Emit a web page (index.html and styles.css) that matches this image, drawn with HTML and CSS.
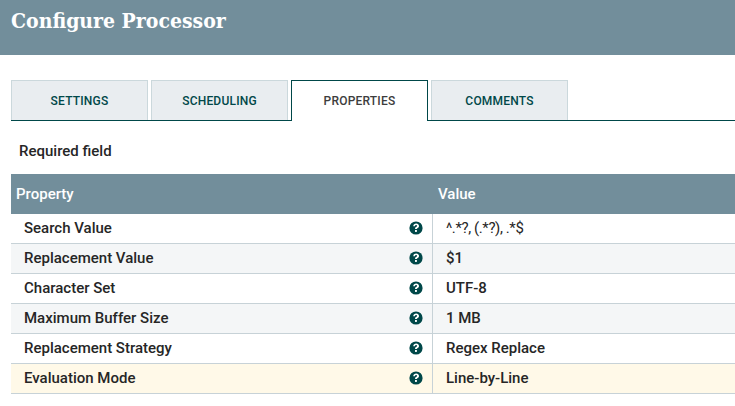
FILE: index.html
```html
<!DOCTYPE html>
<html lang="en">
<head>
<meta charset="utf-8">
<title>Configure Processor</title>
<link rel="stylesheet" href="styles.css">
</head>
<body>
<svg class="defs" width="0" height="0" aria-hidden="true"><defs>
<symbol id="help" viewBox="0 0 14 14">
<circle cx="7" cy="7" r="6.6" fill="#004849"/>
<path d="M4.2 5.2C4.4 3.5 5.6 2.6 7.2 2.6c1.6 0 2.8 1 2.8 2.3 0 1.1-.6 1.6-1.3 2-.6.4-.8.6-.8 1.2H6c0-1.2.4-1.8 1.1-2.2.6-.4 1-.6 1-1 0-.5-.4-.8-1-.8-.7 0-1.1.4-1.2 1.1z" fill="#fff"/>
<rect x="6" y="9" width="1.9" height="1.9" fill="#fff"/>
</symbol>
</defs></svg>
<header class="banner"><h1 class="title">Configure Processor</h1></header>
<nav class="tabs">
<div class="tab">SETTINGS</div>
<div class="tab">SCHEDULING</div>
<div class="tab active">PROPERTIES</div>
<div class="tab">COMMENTS</div>
</nav>
<p class="required">Required field</p>
<section class="grid">
<div class="row head"><div class="name">Property</div><div class="value">Value</div></div>
<div class="row"><div class="name"><span>Search Value</span><svg class="help"><use href="#help"/></svg></div><div class="value pattern">^.*?, (.*?), .*$</div></div>
<div class="row alt"><div class="name"><span>Replacement Value</span><svg class="help"><use href="#help"/></svg></div><div class="value">$1</div></div>
<div class="row"><div class="name"><span>Character Set</span><svg class="help"><use href="#help"/></svg></div><div class="value">UTF-8</div></div>
<div class="row alt"><div class="name"><span>Maximum Buffer Size</span><svg class="help"><use href="#help"/></svg></div><div class="value">1 MB</div></div>
<div class="row"><div class="name"><span>Replacement Strategy</span><svg class="help"><use href="#help"/></svg></div><div class="value">Regex Replace</div></div>
<div class="row selected"><div class="name"><span>Evaluation Mode</span><svg class="help"><use href="#help"/></svg></div><div class="value">Line-by-Line</div></div>
</section>
</body>
</html>
```

FILE: styles.css
```css
* { box-sizing: border-box; }
html, body { margin: 0; padding: 0; }
body {
  width: 735px;
  height: 406px;
  overflow: hidden;
  background: #fff;
  font-family: Roboto, "Liberation Sans", sans-serif;
  color: #262626;
}
.defs { position: absolute; }
.banner {
  height: 55px;
  background: #728e9b;
  padding: 7px 0 0 11px;
}
.title {
  margin: 0;
  font-family: "DejaVu Serif Condensed", "DejaVu Serif", serif;
  font-stretch: condensed;
  font-size: 21px;
  line-height: 27px;
  font-weight: 700;
  color: #fff;
}
.tabs {
  display: flex;
  gap: 3px;
  margin: 25px 0 0 11px;
  height: 41px;
  border-bottom: 1px solid #004849;
}
.tab {
  width: 137px;
  height: 40px;
  background: #e9edf0;
  border: 1px solid #cbd8dc;
  border-bottom: 0;
  display: flex;
  align-items: center;
  justify-content: center;
  font-size: 12px;
  font-weight: 500;
  letter-spacing: 0.2px;
  color: #004849;
}
.tab.active {
  height: 41px;
  background: #fff;
  border-color: #004849;
  color: #3d3d3d;
}
.required {
  margin: 0;
  padding: 22px 0 0 19px;
  height: 53px;
  font-size: 15px;
  line-height: 17px;
  font-weight: 500;
}
.grid { margin-left: 11px; }
.row {
  display: grid;
  grid-template-columns: 421px 1fr;
  height: 30px;
  border-bottom: 1px solid #c7d2d7;
  font-size: 15px;
  font-weight: 500;
  align-items: stretch;
}
.row.alt { background: #f4f6f7; }
.row.selected { background: #fff9e8; }
.row.head {
  height: 40px;
  background: #728e9b;
  border-bottom: 0;
  color: #fff;
}
.name {
  display: flex;
  align-items: center;
  justify-content: space-between;
  padding: 0 9px 2px 13px;
}
.value {
  display: flex;
  align-items: center;
  padding: 0 0 2px 13px;
  border-left: 1px solid #c7d2d7;
}
.pattern {
  font-weight: 400;
  letter-spacing: -0.4px;
}
.head .name { padding: 0 0 0 5px; }
.head .value { padding: 0 0 0 6px; border-left: 0; }
.help { width: 14px; height: 14px; flex: none; }
```
